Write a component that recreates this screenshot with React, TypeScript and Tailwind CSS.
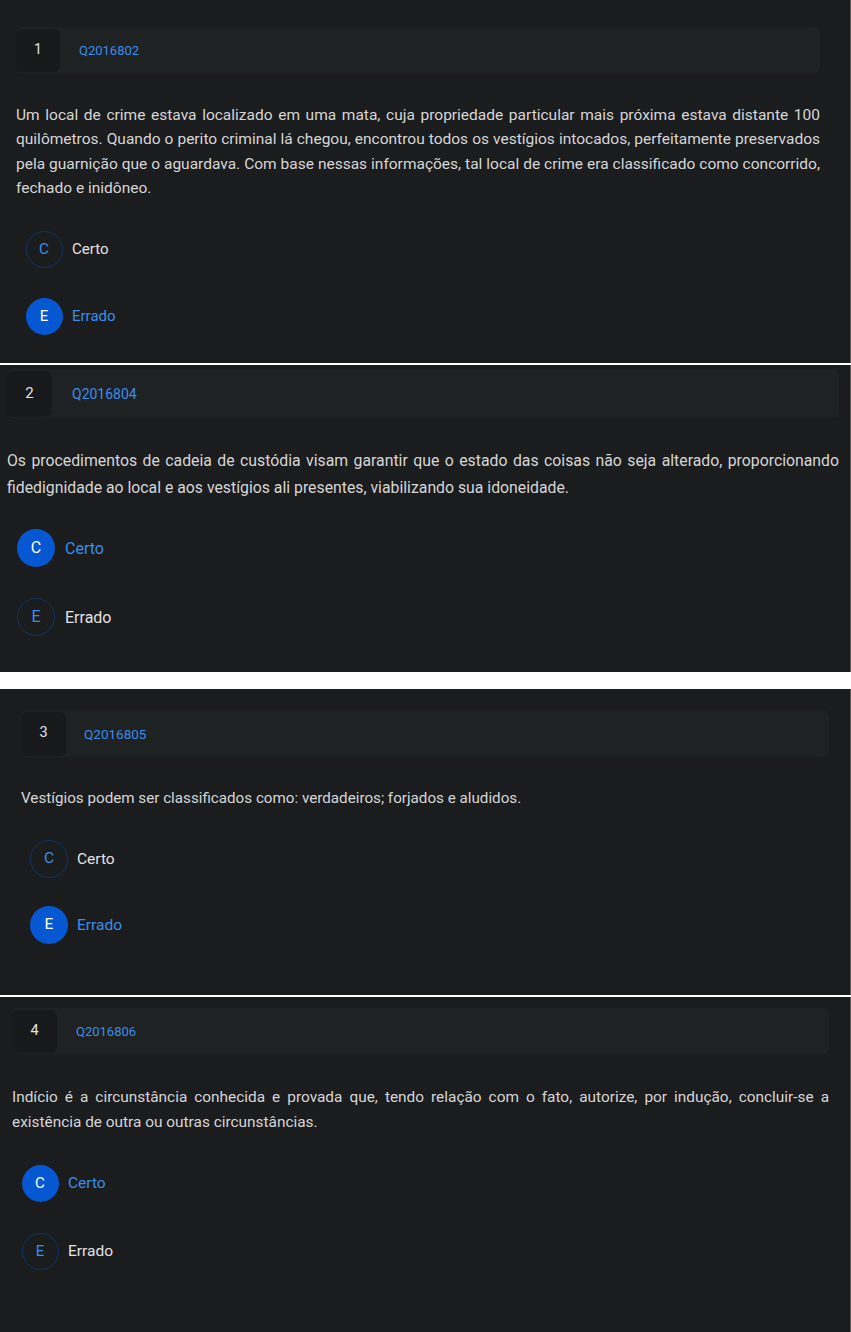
import React from "react";

type Opt = { letter: string; label: string; selected: boolean };

interface Section {
  n: number;
  qid: string;
  text: string;
  options: Opt[];
  wrap: string;
  header: string;
  numBox: string;
  numText: string;
  qidText: string;
  body: string;
  opts: string;
  circle: string;
  circleText: string;
  labelText: string;
}

const sections: Section[] = [
  {
    n: 1,
    qid: "Q2016802",
    text:
      "Um local de crime estava localizado em uma mata, cuja propriedade particular mais próxima estava distante 100 quilômetros. Quando o perito criminal lá chegou, encontrou todos os vestígios intocados, perfeitamente preservados pela guarnição que o aguardava. Com base nessas informações, tal local de crime era classificado como concorrido, fechado e inidôneo.",
    options: [
      { letter: "C", label: "Certo", selected: false },
      { letter: "E", label: "Errado", selected: true },
    ],
    wrap: "h-[363px] pt-[27px] pl-[16px] pr-[30px]",
    header: "h-[46px]",
    numBox: "w-[44px] mr-[19px]",
    numText: "text-[14px]",
    qidText: "text-[13px]",
    body: "mt-[30px] text-[15.5px] leading-[24.3px]",
    opts: "mt-[30.5px] gap-[30px] pl-[9.5px]",
    circle: "w-[37px] h-[37px] mr-[9.5px]",
    circleText: "text-[15px]",
    labelText: "text-[15px]",
  },
  {
    n: 2,
    qid: "Q2016804",
    text:
      "Os procedimentos de cadeia de custódia visam garantir que o estado das coisas não seja alterado, proporcionando fidedignidade ao local e aos vestígios ali presentes, viabilizando sua idoneidade.",
    options: [
      { letter: "C", label: "Certo", selected: true },
      { letter: "E", label: "Errado", selected: false },
    ],
    wrap: "h-[307px] pt-[4px] pl-[7px] pr-[11px]",
    header: "h-[49px]",
    numBox: "w-[45px] mr-[20px]",
    numText: "text-[15px]",
    qidText: "text-[14px]",
    body: "mt-[28.5px] text-[15.8px] leading-[27px]",
    opts: "mt-[28.5px] gap-[31px] pl-[10px]",
    circle: "w-[38px] h-[38px] mr-[10px]",
    circleText: "text-[16px]",
    labelText: "text-[16px]",
  },
  {
    n: 3,
    qid: "Q2016805",
    text: "Vestígios podem ser classificados como: verdadeiros; forjados e aludidos.",
    options: [
      { letter: "C", label: "Certo", selected: false },
      { letter: "E", label: "Errado", selected: true },
    ],
    wrap: "h-[306px] pt-[21px] pl-[21px] pr-[21px]",
    header: "h-[47px]",
    numBox: "w-[45px] mr-[18px]",
    numText: "text-[14.5px]",
    qidText: "text-[13.5px]",
    body: "mt-[28.5px] text-[15.2px] leading-[25px]",
    opts: "mt-[29.5px] gap-[28px] pl-[9px]",
    circle: "w-[38px] h-[38px] mr-[9px]",
    circleText: "text-[15.5px]",
    labelText: "text-[15.5px]",
  },
  {
    n: 4,
    qid: "Q2016806",
    text:
      "Indício é a circunstância conhecida e provada que, tendo relação com o fato, autorize, por indução, concluir-se a existência de outra ou outras circunstâncias.",
    options: [
      { letter: "C", label: "Certo", selected: true },
      { letter: "E", label: "Errado", selected: false },
    ],
    wrap: "h-[335px] pt-[11px] pl-[12px] pr-[21px]",
    header: "h-[46px]",
    numBox: "w-[45px] mr-[19px]",
    numText: "text-[14.5px]",
    qidText: "text-[13px]",
    body: "mt-[31px] text-[15.4px] leading-[25px]",
    opts: "mt-[29.5px] gap-[31px] pl-[9.5px]",
    circle: "w-[37px] h-[37px] mr-[9.5px]",
    circleText: "text-[15px]",
    labelText: "text-[15.5px]",
  },
];

function Question({ s }: { s: Section }) {
  return (
    <div className={`bg-[#1b1c1e] border-r border-[#5c5c5c] ${s.wrap}`}>
      <div className={`flex items-center rounded-md bg-[#1f2223] ${s.header}`}>
        <div className={`flex items-center justify-center self-stretch my-[1.5px] rounded-md bg-[#18191b] pb-[1px] text-[#e4e4e4] ${s.numBox} ${s.numText}`}>
          {s.n}
        </div>
        <span className={`pt-[2px] text-[#3b8deb] ${s.qidText}`}>{s.qid}</span>
      </div>
      <p className={`text-justify text-[#d6d6d6] ${s.body}`}>{s.text}</p>
      <div className={`flex flex-col ${s.opts}`}>
        {s.options.map((o) => (
          <div key={o.letter} className="flex items-center">
            <div
              className={`flex items-center justify-center rounded-full ${s.circle} ${s.circleText} ${
                o.selected ? "bg-[#0657d2] text-white" : "border border-[#0e3466] text-[#3b8deb]"
              }`}
            >
              {o.letter}
            </div>
            <span className={`pt-[1px] ${s.labelText} ${o.selected ? "text-[#3b8deb]" : "text-[#e2e2e2]"}`}>{o.label}</span>
          </div>
        ))}
      </div>
    </div>
  );
}

export default function App() {
  return (
    <div className="w-[851px] h-[1332px] overflow-hidden bg-white" style={{ fontFamily: 'Roboto, "Noto Sans", sans-serif' }}>
      <Question s={sections[0]} />
      <div className="h-[2px] bg-white" />
      <Question s={sections[1]} />
      <div className="h-[17px] bg-white" />
      <Question s={sections[2]} />
      <div className="h-[2px] bg-white" />
      <Question s={sections[3]} />
    </div>
  );
}
